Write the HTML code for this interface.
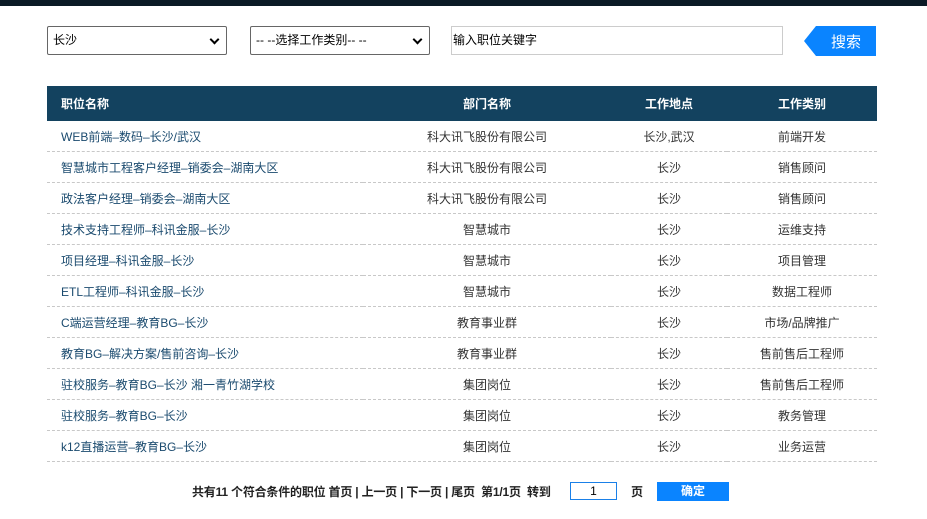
<!DOCTYPE html>
<html><head><meta charset="utf-8"><style>
body{margin:0;width:927px;height:519px;background:#fff;font-family:"Liberation Sans","Noto Sans CJK SC",sans-serif;font-size:12px;color:#333;position:relative;overflow:hidden}
.top{position:absolute;left:0;top:0;width:927px;height:6px;background:#0b1a26}
.sel{position:absolute;top:26px;height:29px;border:1px solid #666;border-radius:2px;box-sizing:border-box;font-size:12px;color:#000;line-height:27px;padding-left:5px;background:#fff}
.sel:after{content:"";position:absolute;right:8px;top:9px;width:5px;height:5px;border-right:2px solid #000;border-bottom:2px solid #000;transform:rotate(45deg)}
.inp{position:absolute;left:451px;top:26px;width:332px;height:29px;border:1px solid #ccc;box-sizing:border-box;line-height:26px;padding-left:1px;color:#000}
.btn{position:absolute;left:804px;top:26px;width:72px;height:30px}
table{position:absolute;left:47px;top:86px;border-collapse:collapse;width:830px}
th{background:#13425f;color:#fff;height:35px;font-weight:bold;font-size:12px;padding:0}
td{height:30px;border-bottom:1px dashed #c8c8c8;text-align:center;padding:0}
td:first-child,th:first-child{text-align:left;padding-left:14px}
td:first-child{color:#1a4a6e}
.pg{position:absolute;top:483px;left:192px;font-size:12px;color:#222;font-weight:bold;white-space:nowrap;letter-spacing:-0.2px}
.pbox{position:absolute;left:570px;top:482px;width:47px;height:18px;border:1px solid #1a80e8;box-sizing:border-box;text-align:center;line-height:16px;color:#000}
.ok{position:absolute;left:657px;top:482px;width:72px;height:19px;background:#0a84ff;color:#fff;text-align:center;line-height:19px;font-weight:bold}
</style></head><body>
<div class="top"></div>
<div class="sel" style="left:47px;width:180px">长沙</div>
<div class="sel" style="left:250px;width:180px">-- --选择工作类别-- --</div>
<div class="inp">输入职位关键字</div>
<svg class="btn" viewBox="0 0 72 30"><polygon points="12,0 72,0 72,30 12,30 0,15" fill="#0a84ff"/><text x="42" y="21" fill="#fff" font-size="15" text-anchor="middle" font-family="Liberation Sans,Noto Sans CJK SC,sans-serif">搜索</text></svg>
<table>
<colgroup><col style="width:316px"><col style="width:248px"><col style="width:116px"><col style="width:150px"></colgroup>
<tr><th>职位名称</th><th>部门名称</th><th>工作地点</th><th>工作类别</th></tr>
<tr><td>WEB前端–数码–长沙/武汉</td><td>科大讯飞股份有限公司</td><td>长沙,武汉</td><td>前端开发</td></tr>
<tr><td>智慧城市工程客户经理–销委会–湖南大区</td><td>科大讯飞股份有限公司</td><td>长沙</td><td>销售顾问</td></tr>
<tr><td>政法客户经理–销委会–湖南大区</td><td>科大讯飞股份有限公司</td><td>长沙</td><td>销售顾问</td></tr>
<tr><td>技术支持工程师–科讯金服–长沙</td><td>智慧城市</td><td>长沙</td><td>运维支持</td></tr>
<tr><td>项目经理–科讯金服–长沙</td><td>智慧城市</td><td>长沙</td><td>项目管理</td></tr>
<tr><td>ETL工程师–科讯金服–长沙</td><td>智慧城市</td><td>长沙</td><td>数据工程师</td></tr>
<tr><td>C端运营经理–教育BG–长沙</td><td>教育事业群</td><td>长沙</td><td>市场/品牌推广</td></tr>
<tr><td>教育BG–解决方案/售前咨询–长沙</td><td>教育事业群</td><td>长沙</td><td>售前售后工程师</td></tr>
<tr><td>驻校服务–教育BG–长沙 湘一青竹湖学校</td><td>集团岗位</td><td>长沙</td><td>售前售后工程师</td></tr>
<tr><td>驻校服务–教育BG–长沙</td><td>集团岗位</td><td>长沙</td><td>教务管理</td></tr>
<tr><td>k12直播运营–教育BG–长沙</td><td>集团岗位</td><td>长沙</td><td>业务运营</td></tr>
</table>
<div class="pg">共有11 个符合条件的职位 首页 | 上一页 | 下一页 | 尾页&nbsp;&nbsp;第1/1页&nbsp;&nbsp;转到</div>
<div class="pbox">1</div>
<div class="pg" style="left:631px">页</div>
<div class="ok">确定</div>
</body></html>
